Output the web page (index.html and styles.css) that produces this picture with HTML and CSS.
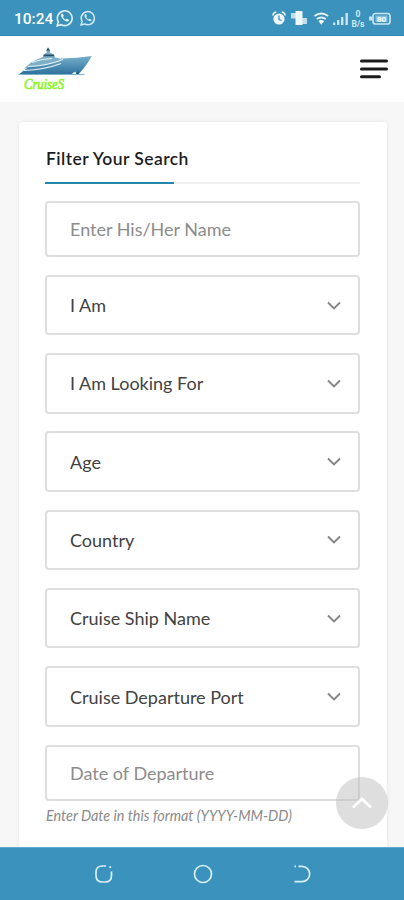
FILE: index.html
```html
<!DOCTYPE html>
<html lang="en">
<head>
<meta charset="utf-8">
<title>CruiseS</title>
<link rel="stylesheet" href="styles.css">
</head>
<body>
<div class="status">
  <span class="time">10:24</span>
  <svg class="chat" width="18" height="18" viewBox="0 0 18 18"><path d="M1.2 16.8l1.1-4A7.4 7.4 0 1 1 5.2 15.7z" fill="none" stroke="#e4f3fa" stroke-width="1.6"/><path d="M6 4.5c-2 1.5-.5 4 1.4 5.9s4.5 3.2 5.6 1.1c.3-.8-1.9-1.9-2.3-1.7l-.9 1C8.5 10.2 7.5 9.2 7 8l.8-1.1C7.8 6.3 6.8 4.3 6 4.5z" fill="#e4f3fa"/></svg>
  <svg class="chat second" width="16" height="16" viewBox="0 0 18 18"><path d="M1.2 16.8l1.1-4A7.4 7.4 0 1 1 5.2 15.7z" fill="none" stroke="#d5ebf5" stroke-width="1.7"/><path d="M6 4.5c-2 1.5-.5 4 1.4 5.9s4.5 3.2 5.6 1.1c.3-.8-1.9-1.9-2.3-1.7l-.9 1C8.5 10.2 7.5 9.2 7 8l.8-1.1C7.8 6.3 6.8 4.3 6 4.5z" fill="#d5ebf5"/></svg>
  <svg class="signals" width="120" height="22" viewBox="0 0 120 22">
    <g fill="#eef8fc">
      <circle cx="7" cy="12" r="5.6"/>
      <path d="M.8 8.5a4 4 0 0 1 3.5-3.5M13.2 8.5a4 4 0 0 0-3.5-3.5" fill="none" stroke="#eef8fc" stroke-width="1.5"/>
      <path d="M7 8.5v4l2.5 1" fill="none" stroke="#3a92bd" stroke-width="1.3"/>
      <path d="M23.5 4h7v14h-7z"/><path d="M19 6h5v5.5h-5zM30 11h5v6h-5z" opacity=".75"/>
    </g>
    <g fill="none" stroke="#e8f5fb" stroke-width="1.9">
      <path d="M42.5 9q6.8-5 13.6 0M44.8 12q4.5-3 9 0"/>
    </g>
    <path d="M46.5 14q2.8-1.8 5.6 0l-2.8 3.8z" fill="#fff"/>
    <g fill="#c9e4f1"><path d="M61 15.5h2.3V18H61zM65 13h2.4v5H65zM69 10h2.4v8H69zM73.5 6h2.4v12h-2.4z"/></g>
    <text x="86" y="9.5" class="tiny">0</text><text x="86" y="19.5" class="tiny">B/s</text>
    <rect x="101" y="6.5" width="17" height="10.5" rx="2.5" fill="none" stroke="#c9e5f2" stroke-width="1.7"/>
    <path d="M97 9.5h3v4h-3z" fill="#c9e5f2"/><rect x="103.5" y="8.5" width="12" height="6.5" fill="#86c0db"/>
    <text x="109.5" y="15" class="charge">80</text>
  </svg>
</div>
<header class="header">
  <svg class="logo" width="80" height="50" viewBox="0 0 80 50" role="img">
    <defs><linearGradient id="hull" x1="0" y1="0" x2="0" y2="1"><stop offset="0" stop-color="#78b0cc"/><stop offset="1" stop-color="#2d719d"/></linearGradient></defs>
    <path d="M13 18.5q5-3 12-5.5v-2q2-2 4-2.5l-1-2 2-3 2 3v2l4 2 1 3 9 2-16 7-24 2z" fill="#7eafc7"/>
    <path d="M28.5 6.5l1.5-3 2 3.2zM26.5 10.5h9l1 1.8h-11z" fill="#28506b"/>
    <path d="M.7 30.5q5-4.500 11-8 16 0 32-8 15-.5 30-2.500-4 8-12 17l-7 1.500z" fill="url(#hull)"/>
    <path d="M10 22.5q17 0 35-7M14 18.5q9-3.500 20-4M6 26.5q21-1 37-7" fill="none" stroke="#e6f2f7" stroke-width="1.2"/>
    <path d="M53 31q3-4.500 7-3l3 3z" fill="#eef6fa"/><circle cx="59.5" cy="29" r="1.7" fill="#23638c"/>
    <path d="M.5 30.5h66" stroke="#7eb0ca" stroke-width="1"/>
    <text x="6" y="45" class="brand" textLength="40" lengthAdjust="spacingAndGlyphs">CruiseS</text>
  </svg>
  <svg class="menu" width="28" height="20" viewBox="0 0 28 20"><path d="M1.5 2h25M1.5 10h25M1.5 17.7h18" stroke="#1b1b1b" stroke-width="3" stroke-linecap="round"/></svg>
</header>
<main class="page">
  <form class="card">
    <h1 class="title">Filter Your Search</h1>
    <div class="field input">Enter His/Her Name</div>
    <div class="field"><span>I Am</span><svg class="chev" viewBox="0 0 14 9"><path d="M1 1.5l6 6 6-6"/></svg></div>
    <div class="field"><span>I Am Looking For</span><svg class="chev" viewBox="0 0 14 9"><path d="M1 1.5l6 6 6-6"/></svg></div>
    <div class="field"><span>Age</span><svg class="chev" viewBox="0 0 14 9"><path d="M1 1.5l6 6 6-6"/></svg></div>
    <div class="field"><span>Country</span><svg class="chev" viewBox="0 0 14 9"><path d="M1 1.5l6 6 6-6"/></svg></div>
    <div class="field"><span>Cruise Ship Name</span><svg class="chev" viewBox="0 0 14 9"><path d="M1 1.5l6 6 6-6"/></svg></div>
    <div class="field"><span>Cruise Departure Port</span><svg class="chev" viewBox="0 0 14 9"><path d="M1 1.5l6 6 6-6"/></svg></div>
    <div class="field input date">Date of Departure</div>
    <p class="hint">Enter Date in this format (YYYY-MM-DD)</p>
  </form>
</main>
<div class="top"><svg width="22" height="14" viewBox="0 0 22 14"><path d="M2 11.5l9-8.5 9 8.5" fill="none" stroke="#fff" stroke-width="2.8"/></svg></div>
<nav class="nav">
  <svg width="20" height="20" viewBox="0 0 20 20"><path d="M12 2H8.5Q2 2 2 8v3.5Q2 18 8.5 18h2.500q6.500 0 6.500-6.500V7.500M15.500 2.500l1.500 1.200"/></svg>
  <svg width="20" height="20" viewBox="0 0 20 20"><circle cx="10" cy="10" r="8.5"/></svg>
  <svg width="20" height="20" viewBox="0 0 20 20"><path d="M6.5 2.3H10a7.7 7.7 0 0 1 0 15.4H2.5M2.5 2.3h1.5"/></svg>
</nav>
</body>
</html>
```

FILE: styles.css
```css
* { box-sizing: border-box; }
body {
  margin: 0;
  height: 900px;
  overflow: hidden;
  display: flex;
  flex-direction: column;
  background: #f7f7f8;
  font-family: Lato, "Liberation Sans", sans-serif;
}
.status {
  height: 36px;
  flex: none;
  display: flex;
  align-items: center;
  padding: 0 12px 0 14px;
  background: #3a92bd;
  border-bottom: 1px solid #2f86b3;
}
.time {
  width: 42px;
  font: 500 15.5px/20px Roboto, sans-serif;
  color: #fff;
  padding-top: 2px;
}
.second { margin-left: 6px; }
.signals { margin-left: auto; }
.tiny { font: 700 8.5px Roboto, sans-serif; fill: #d3eaf5; text-anchor: middle; }
.charge { font: 700 8px Roboto, sans-serif; fill: #fff; text-anchor: middle; }
.header {
  height: 66px;
  flex: none;
  display: flex;
  justify-content: space-between;
  align-items: center;
  padding: 0 16px 0 18px;
  background: #fff;
}
.brand { font: italic 400 15px "Liberation Serif", serif; fill: #8cf52c; stroke: #8cf52c; stroke-width: .7px; }
.page { flex: 1; min-height: 0; padding: 20px 17px 0 19px; overflow: hidden; }
.card {
  height: 760px;
  padding: 26px 27px 0 26px;
  background: #fff;
  border-radius: 4px;
  box-shadow: 0 0 4px rgba(0, 0, 0, .08);
}
.title {
  margin: 0 0 17.5px;
  height: 35.5px;
  padding-left: 1px;
  font-size: 17.5px;
  line-height: 22px;
  font-weight: 600;
  letter-spacing: .42px;
  color: #1d1d1f;
  border-bottom: 2px solid;
  border-image: linear-gradient(to right, #2587ae 129px, #f0f0f1 129px) 1;
}
.field {
  height: 60.5px;
  margin-bottom: 17.8px;
  padding: 0 17.5px 0 23px;
  display: flex;
  align-items: center;
  justify-content: space-between;
  border: 2px solid #dedede;
  border-radius: 4px;
  color: #424242;
  font-size: 18px;
  white-space: nowrap;
}
.input { height: 56px; color: #8c8c8c; }
.chev { width: 14px; height: 9px; fill: none; stroke: #858585; stroke-width: 1.9; }
.date { margin-bottom: 5px; }
.hint { margin: 0; padding-left: 1px; font-size: 14.4px; line-height: 20px; font-style: italic; color: #8a8a8a; white-space: nowrap; }
.top {
  position: absolute;
  left: 336px;
  top: 777px;
  width: 52px;
  height: 52px;
  border-radius: 50%;
  background: rgba(190, 190, 190, .5);
  display: flex;
  align-items: center;
  justify-content: center;
}
.nav {
  height: 53px;
  flex: none;
  display: flex;
  align-items: center;
  justify-content: center;
  gap: 79px;
  padding-left: 1px;
  background: #3a92bd;
  border-top: 1px solid #63a9cb;
}
.nav svg { fill: none; stroke: #d9eff9; stroke-width: 1.7; }
```
